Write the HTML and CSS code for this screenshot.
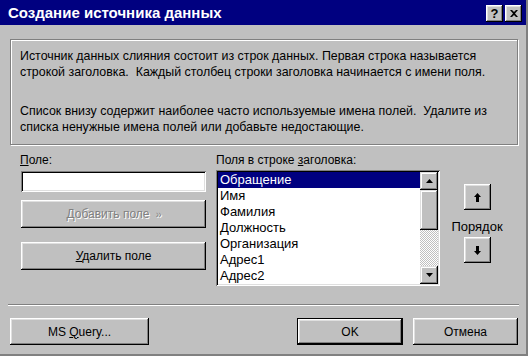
FILE: index.html
```html
<!DOCTYPE html>
<html lang="ru">
<head>
    <meta charset="UTF-8">
    <title>Создание источника данных</title>
    <link rel="stylesheet" href="styles.css">
</head>
<body>

<div class="window">
    <div class="titlebar">
        <span class="title">Создание источника данных</span>
        <div class="title-buttons">
            <span class="tbtn help">?</span>
            <span class="tbtn">
                <svg width="8" height="7" viewBox="0 0 8 7"><path d="M0 0h2l2 2 2-2h2L5 3.5 8 7H6L4 5 2 7H0l3-3.5z" fill="#000"/></svg>
            </span>
        </div>
    </div>

    <div class="content">
        <div class="info">
            <p>Источник данных слияния состоит из строк данных. Первая строка называется строкой заголовка.&nbsp; Каждый столбец строки заголовка начинается с имени поля.</p>
            <p>Список внизу содержит наиболее часто используемые имена полей.&nbsp; Удалите из списка ненужные имена полей или добавьте недостающие.</p>
        </div>

        <div class="fields">
            <div class="col-left">
                <label class="lbl" for="fieldName"><u>П</u>оле:</label>
                <input type="text" id="fieldName" class="field">
                <button class="btn btn-add" disabled>Добавить поле <span class="chev">››</span></button>
                <button class="btn btn-del"><u>У</u>далить поле</button>
            </div>

            <div class="col-list">
                <span class="lbl">Поля в строке <u>з</u>аголовка:</span>
                <div class="listbox">
                    <ul class="items">
                        <li class="selected">Обращение</li>
                        <li>Имя</li>
                        <li>Фамилия</li>
                        <li>Должность</li>
                        <li>Организация</li>
                        <li>Адрес1</li>
                        <li>Адрес2</li>
                    </ul>
                    <div class="scrollbar">
                        <div class="sb-btn">
                            <svg width="7" height="4" viewBox="0 0 7 4"><path d="M3.5 0L7 4H0z" fill="#000"/></svg>
                        </div>
                        <div class="sb-thumb"></div>
                        <div class="sb-track"></div>
                        <div class="sb-btn">
                            <svg width="7" height="4" viewBox="0 0 7 4"><path d="M0 0h7L3.5 4z" fill="#000"/></svg>
                        </div>
                    </div>
                </div>
            </div>

            <div class="col-order">
                <button class="btn btn-move">
                    <svg width="7" height="9" viewBox="0 0 7 9"><path d="M3.5 0L7 4H5v5H2V4H0z" fill="#000"/></svg>
                </button>
                <span class="order-label">Порядок</span>
                <button class="btn btn-move">
                    <svg width="7" height="9" viewBox="0 0 7 9"><path d="M2 0h3v5h2L3.5 9 0 5h2z" fill="#000"/></svg>
                </button>
            </div>
        </div>

        <div class="separator"></div>

        <div class="footer">
            <button class="btn btn-query">MS <u>Q</u>uery...</button>
            <div class="footer-right">
                <button class="btn btn-default">OK</button>
                <button class="btn btn-cancel">Отмена</button>
            </div>
        </div>
    </div>
</div>

</body>
</html>
```

FILE: styles.css
```css
body {
    margin: 0;
    background-color: #c0c0c0;
    font-family: "Liberation Sans", Arial, sans-serif;
    font-size: 12px;
    color: #000;
}
.window {
    width: 528px;
    height: 356px;
    box-sizing: border-box;
    border-right: 2px solid #808080;
    border-bottom: 2px solid #808080;
    background-color: #c0c0c0;
    overflow: hidden;
}
.titlebar {
    height: 25px;
    background-color: #000080;
    display: flex;
    align-items: center;
    justify-content: space-between;
    padding: 0 4px 0 8px;
}
.title {
    color: #fff;
    font-weight: bold;
    font-size: 15px;
}
.title-buttons {
    display: flex;
    gap: 2px;
    margin-top: 1px;
}
.tbtn {
    width: 17px;
    height: 17px;
    box-sizing: border-box;
    background-color: #c0c0c0;
    box-shadow: inset -1px -1px #000, inset 1px 1px #fff, inset -2px -2px #808080, inset 2px 2px #dfdfdf;
    display: flex;
    align-items: center;
    justify-content: center;
}
.help {
    font-weight: bold;
    font-size: 13px;
    line-height: 1;
}
.content {
    padding: 14px 8px 0 10px;
}
.info {
    border: 1px solid #808080;
    box-shadow: inset 1px 1px #fff, 1px 1px #fff;
    padding: 8px 9px 10px 9px;
    width: 508px;
    box-sizing: border-box;
    height: 106px;
    font-size: 12.4px;
}
.info p {
    margin: 0;
    line-height: 16px;
}
.info p + p {
    margin-top: 23px;
}
.fields {
    display: flex;
    margin-top: 7px;
}
.lbl {
    display: block;
    line-height: 16px;
    height: 16px;
}
.col-left {
    width: 185px;
    margin-left: 11px;
    display: flex;
    flex-direction: column;
}
.col-left .lbl {
    margin-left: -1px;
}
.field {
    margin: 3px 0 0 0;
    height: 21px;
    box-sizing: border-box;
    border: none;
    background-color: #fff;
    box-shadow: inset 1px 1px #808080, inset -1px -1px #fff, inset 2px 2px #000, inset -2px -2px #dfdfdf;
    padding: 0 4px;
    font: inherit;
    outline: none;
}
.btn {
    background-color: #c0c0c0;
    border: none;
    padding: 0;
    font: inherit;
    color: #000;
    text-align: center;
    box-shadow: inset -1px -1px #000, inset 1px 1px #fff, inset -2px -2px #808080, inset 2px 2px #dfdfdf;
}
.btn-add {
    margin-top: 8px;
    height: 28px;
    color: #808080;
    text-shadow: 1px 1px #fff;
}
.chev {
    font-size: 10px;
    margin-left: 3px;
    letter-spacing: -1px;
}
.btn-del {
    margin-top: 14px;
    height: 28px;
}
.col-list {
    width: 224px;
    margin-left: 10px;
}
.listbox {
    margin-top: 2px;
    height: 116px;
    box-sizing: border-box;
    padding: 2px;
    background-color: #fff;
    box-shadow: inset 1px 1px #808080, inset -1px -1px #fff, inset 2px 2px #000, inset -2px -2px #dfdfdf;
    display: flex;
}
.items {
    list-style: none;
    margin: 0;
    padding: 0;
    flex: 1;
}
.items li {
    height: 16px;
    line-height: 16px;
    padding-left: 2px;
    font-size: 13px;
}
.items .selected {
    background-color: #000080;
    color: #fff;
}
.scrollbar {
    width: 18px;
    display: flex;
    flex-direction: column;
}
.sb-btn,
.sb-thumb {
    background-color: #c0c0c0;
    box-shadow: inset -1px -1px #000, inset 1px 1px #dfdfdf, inset -2px -2px #808080, inset 2px 2px #fff;
    display: flex;
    align-items: center;
    justify-content: center;
}
.sb-btn {
    height: 18px;
}
.sb-thumb {
    height: 40px;
}
.sb-track {
    flex: 1;
    background-image: conic-gradient(#fff 25%, #c0c0c0 0 50%, #fff 0 75%, #c0c0c0 0);
    background-size: 2px 2px;
}
.col-order {
    width: 50px;
    margin-left: 12px;
    display: flex;
    flex-direction: column;
    align-items: center;
}
.btn-move {
    width: 27px;
    height: 26px;
    line-height: 0;
}
.col-order .btn-move:first-child {
    margin-top: 32px;
}
.order-label {
    line-height: 16px;
    margin: 9px 0 2px;
    font-size: 13px;
}
.separator {
    margin: 18px 0 0 -2px;
    height: 1px;
    width: 511px;
    background-color: #808080;
    border-bottom: 1px solid #fff;
}
.footer {
    display: flex;
    justify-content: space-between;
    margin-top: 12px;
}
.footer .btn {
    height: 27px;
}
.btn-query {
    width: 139px;
}
.footer-right {
    display: flex;
    gap: 10px;
}
.btn-default {
    width: 106px;
    box-shadow: inset 0 0 0 1px #000, inset -2px -2px #000, inset 2px 2px #fff, inset -3px -3px #808080, inset 3px 3px #dfdfdf;
}
.btn-cancel {
    width: 105px;
}
```
